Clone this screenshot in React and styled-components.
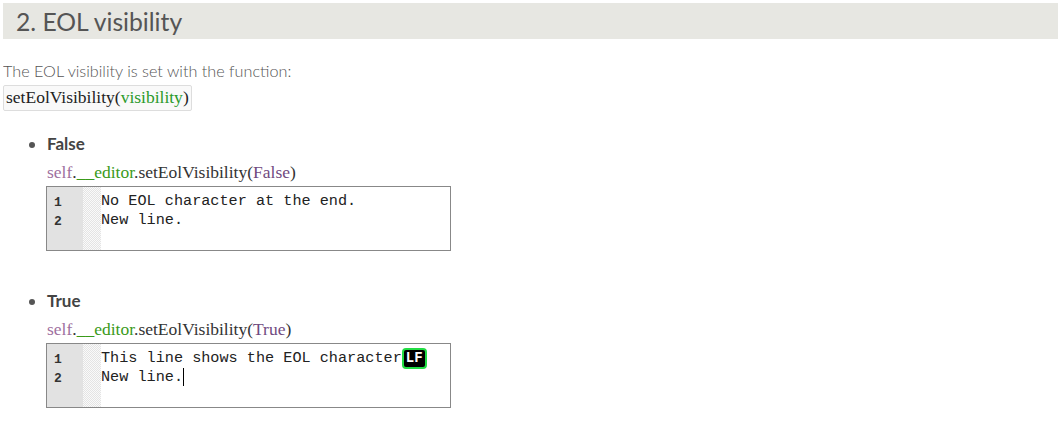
import React from 'react'
import styled, { createGlobalStyle } from 'styled-components'

const GlobalStyle = createGlobalStyle`
    body {
        margin: 3px;
        background: #fff;
        font-family: Lato, "Open Sans", sans-serif;
        color: #555;
    }
`

const Page = styled.div`
    width: 1055px;
`

const Heading = styled.h2`
    margin: 0;
    height: 36px;
    line-height: 38px;
    padding-left: 13px;
    background: #e7e7e2;
    font-size: 24.7px;
    font-weight: 400;
    color: #555;
`

const Intro = styled.p`
    margin: 22px 0 0;
    font-size: 16.2px;
    font-weight: 300;
    line-height: 20px;
`

const FuncBox = styled.div`
    display: inline-block;
    margin-top: 4px;
    padding: 1px 2px 2px 2px;
    border: 1px solid #ddd;
    border-radius: 2px;
    background: #f9f9f9;
    font-family: "Liberation Serif", serif;
    font-size: 17.5px;
    line-height: 21px;
    color: #222;
`

const List = styled.ul`
    margin: 22px 0 0;
    padding-left: 44px;
`

const Item = styled.li`
    margin-bottom: 39px;
    font-size: 17px;
    &::marker {
        color: #555;
    }
`

const Label = styled.div`
    font-weight: 700;
    line-height: 20px;
    color: #444;
`

const Call = styled.div`
    margin-top: 8px;
    font-family: "Liberation Serif", serif;
    font-size: 17.5px;
    line-height: 20px;
    color: #333;
`

const Token = styled.span`
    color: ${p => p.$c};
`

const Editor = styled.div`
    display: flex;
    width: 403px;
    height: 63px;
    margin-top: 4px;
    border: 1px solid #888;
    background: #fff;
    margin-left: -1px;
`

const Gutter = styled.div`
    width: 36px;
    padding: 6px 0 0 7px;
    box-sizing: border-box;
    background: #e2e2e2;
    font-family: "Liberation Mono", monospace;
    font-size: 13px;
    font-weight: 700;
    line-height: 19px;
    color: #333;
`

const Fold = styled.div`
    width: 18px;
    background-color: #fff;
    background-image: repeating-conic-gradient(#e4e4e4 0 25%, #fafafa 0 50%);
    background-size: 2px 2px;
`

const Lines = styled.div`
    padding: 5px 0 0 0;
    font-family: "Liberation Mono", monospace;
    font-size: 15.2px;
    line-height: 19px;
    color: #222;
    white-space: pre;
`

const Row = styled.div`
    height: 19px;
`

const Eol = styled.span`
    display: inline-block;
    height: 21px;
    width: 25px;
    margin-top: -1px;
    line-height: 17px;
    text-align: center;
    box-sizing: border-box;
    background: #000;
    color: #fff;
    border: 2px solid #22dd44;
    border-radius: 4px;
    font-size: 14px;
    font-weight: 700;
    vertical-align: top;
`

const Caret = styled.span`
    display: inline-block;
    width: 1px;
    height: 18px;
    background: #000;
    vertical-align: top;
`

const cases = [
    {
        label: 'False',
        lines: [<>No EOL character at the end.</>, <>New line.</>],
    },
    {
        label: 'True',
        lines: [
            <>This line shows the EOL character<Eol>LF</Eol></>,
            <>New line.<Caret /></>,
        ],
    },
]

export default function App() {
    return (
        <Page>
            <GlobalStyle />
            <Heading>2. EOL visibility</Heading>
            <Intro>The EOL visibility is set with the function:</Intro>
            <FuncBox>
                setEolVisibility(<Token $c="#2a9a2a">visibility</Token>)
            </FuncBox>
            <List>
                {cases.map(c => (
                    <Item key={c.label}>
                        <Label>{c.label}</Label>
                        <Call>
                            <Token $c="#a070a0">self</Token>.
                            <Token $c="#3a9a1a">__editor</Token>.setEolVisibility(
                            <Token $c="#704a80">{c.label}</Token>)
                        </Call>
                        <Editor>
                            <Gutter>
                                {c.lines.map((_, i) => <Row key={i}>{i + 1}</Row>)}
                            </Gutter>
                            <Fold />
                            <Lines>
                                {c.lines.map((l, i) => <Row key={i}>{l}</Row>)}
                            </Lines>
                        </Editor>
                    </Item>
                ))}
            </List>
        </Page>
    )
}
